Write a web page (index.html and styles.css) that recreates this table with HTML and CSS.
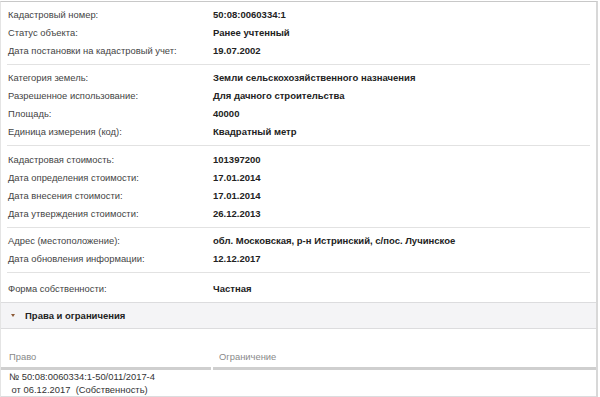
FILE: index.html
```html
<!DOCTYPE html>
<html lang="ru">
<head>
<meta charset="utf-8">
<link rel="stylesheet" href="styles.css">
</head>
<body>
<div class="panel">
  <div class="group first">
    <div class="row"><span class="lbl">Кадастровый номер:</span><span class="val">50:08:0060334:1</span></div>
    <div class="row"><span class="lbl">Статус объекта:</span><span class="val">Ранее учтенный</span></div>
    <div class="row"><span class="lbl">Дата постановки на кадастровый учет:</span><span class="val">19.07.2002</span></div>
  </div>
  <div class="group">
    <div class="row"><span class="lbl">Категория земель:</span><span class="val">Земли сельскохозяйственного назначения</span></div>
    <div class="row"><span class="lbl">Разрешенное использование:</span><span class="val">Для дачного строительства</span></div>
    <div class="row"><span class="lbl">Площадь:</span><span class="val">40000</span></div>
    <div class="row"><span class="lbl">Единица измерения (код):</span><span class="val">Квадратный метр</span></div>
  </div>
  <div class="group">
    <div class="row"><span class="lbl">Кадастровая стоимость:</span><span class="val">101397200</span></div>
    <div class="row"><span class="lbl">Дата определения стоимости:</span><span class="val">17.01.2014</span></div>
    <div class="row"><span class="lbl">Дата внесения стоимости:</span><span class="val">17.01.2014</span></div>
    <div class="row"><span class="lbl">Дата утверждения стоимости:</span><span class="val">26.12.2013</span></div>
  </div>
  <div class="group">
    <div class="row"><span class="lbl">Адрес (местоположение):</span><span class="val">обл. Московская, р-н Истринский, с/пос. Лучинское</span></div>
    <div class="row"><span class="lbl">Дата обновления информации:</span><span class="val">12.12.2017</span></div>
  </div>
  <div class="group last">
    <div class="row"><span class="lbl">Форма собственности:</span><span class="val">Частная</span></div>
  </div>
  <div class="section-head"><span class="arrow"></span><span class="section-title">Права и ограничения</span></div>
  <div class="rights">
    <div class="rights-head">
      <div class="col col-right">Право</div>
      <div class="col col-limit">Ограничение</div>
    </div>
    <div class="rights-row">
      <div class="col col-right">№ 50:08:0060334:1-50/011/2017-4<br>&nbsp;от 06.12.2017 &nbsp;(Собственность)</div>
      <div class="col col-limit"></div>
    </div>
  </div>
</div>
</body>
</html>
```
FILE: styles.css
```css
html, body {
  margin: 0;
  padding: 0;
  background: #fff;
}
body {
  font-family: "Liberation Sans", Arial, sans-serif;
  font-size: 9.4px;
  color: #333;
  padding-top: 1px;
}
.panel {
  border-top: 1px solid #c8c8c8;
  border-left: 1px solid #e4e4e4;
  border-right: 2px solid #d8d8d8;
  width: 598px;
  box-sizing: border-box;
}
.group {
  margin: 0 6px;
  padding: 4px 0 4.5px;
  border-bottom: 1px solid #e2e2e2;
}
.group.first {
  padding-top: 3px;
}
.group.last {
  margin: 0;
  padding: 6px 6px 5px;
  border-bottom: 1px solid #dcdcde;
}
.row {
  display: flex;
  height: 18px;
  align-items: center;
}
.lbl {
  width: 205px;
  padding-left: 1px;
  color: #444;
}
.val {
  font-weight: bold;
  font-size: 9.5px;
  color: #222;
}
.section-head {
  display: flex;
  align-items: center;
  height: 25px;
  background: #f4f4f6;
  border-bottom: 1px solid #dcdcde;
  padding-left: 10px;
}
.arrow {
  width: 0;
  height: 0;
  border-left: 2.5px solid transparent;
  border-right: 2.5px solid transparent;
  border-top: 3px solid #8c5a36;
  margin-right: 10px;
}
.section-title {
  font-weight: bold;
  font-size: 9.5px;
  color: #222;
}
.rights-head {
  display: flex;
  padding-top: 20.5px;
  gap: 2px;
}
.rights-head .col {
  color: #8a8a8a;
  padding: 0 0 4.5px 8px;
  border-bottom: 3px solid #cfcfcf;
  line-height: 13px;
}
.col-right {
  width: 202px;
}
.rights-head .col-limit {
  flex: 1;
  padding-left: 6px;
}
.rights-row {
  display: flex;
  border-bottom: 1px solid #dcdcde;
}
.rights-row .col {
  color: #333;
  padding-left: 8px;
  line-height: 13px;
}
```
